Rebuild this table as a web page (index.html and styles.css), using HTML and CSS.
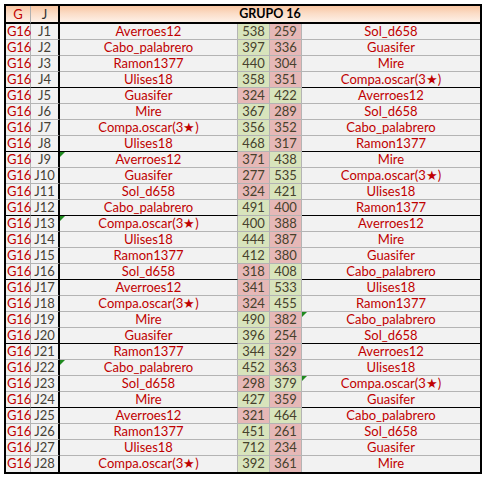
FILE: index.html
```html
<!DOCTYPE html>
<html lang="es">
<head>
<meta charset="utf-8">
<title>Grupo 16</title>
<link rel="stylesheet" href="styles.css">
</head>
<body>
<div class="sheet">
  <div class="hd g">G</div><div class="hd j">J</div><div class="hd title">GRUPO 16</div>

  <div class="c g">G16</div><div class="c j">J1</div><div class="c n">Averroes12</div><div class="c s win">538</div><div class="c s lose">259</div><div class="c n r">Sol_d658</div>
  <div class="c g">G16</div><div class="c j">J2</div><div class="c n">Cabo_palabrero</div><div class="c s win">397</div><div class="c s lose">336</div><div class="c n r">Guasifer</div>
  <div class="c g">G16</div><div class="c j">J3</div><div class="c n">Ramon1377</div><div class="c s win">440</div><div class="c s lose">304</div><div class="c n r">Mire</div>
  <div class="c g end">G16</div><div class="c j end">J4</div><div class="c n end">Ulises18</div><div class="c s win">358</div><div class="c s lose">351</div><div class="c n r end">Compa.oscar(3★)</div>

  <div class="c g">G16</div><div class="c j">J5</div><div class="c n">Guasifer</div><div class="c s lose">324</div><div class="c s win">422</div><div class="c n r">Averroes12</div>
  <div class="c g">G16</div><div class="c j">J6</div><div class="c n">Mire</div><div class="c s win">367</div><div class="c s lose">289</div><div class="c n r">Sol_d658</div>
  <div class="c g">G16</div><div class="c j">J7</div><div class="c n">Compa.oscar(3★)</div><div class="c s win">356</div><div class="c s lose">352</div><div class="c n r">Cabo_palabrero</div>
  <div class="c g end">G16</div><div class="c j end">J8</div><div class="c n end">Ulises18</div><div class="c s win">468</div><div class="c s lose">317</div><div class="c n r end">Ramon1377</div>

  <div class="c g">G16</div><div class="c j">J9</div><div class="c n flag">Averroes12</div><div class="c s lose">371</div><div class="c s win">438</div><div class="c n r">Mire</div>
  <div class="c g">G16</div><div class="c j">J10</div><div class="c n">Guasifer</div><div class="c s lose">277</div><div class="c s win">535</div><div class="c n r">Compa.oscar(3★)</div>
  <div class="c g">G16</div><div class="c j">J11</div><div class="c n">Sol_d658</div><div class="c s lose">324</div><div class="c s win">421</div><div class="c n r">Ulises18</div>
  <div class="c g end">G16</div><div class="c j end">J12</div><div class="c n end">Cabo_palabrero</div><div class="c s win">491</div><div class="c s lose">400</div><div class="c n r end">Ramon1377</div>

  <div class="c g">G16</div><div class="c j">J13</div><div class="c n flag">Compa.oscar(3★)</div><div class="c s win">400</div><div class="c s lose">388</div><div class="c n r">Averroes12</div>
  <div class="c g">G16</div><div class="c j">J14</div><div class="c n">Ulises18</div><div class="c s win">444</div><div class="c s lose">387</div><div class="c n r">Mire</div>
  <div class="c g">G16</div><div class="c j">J15</div><div class="c n">Ramon1377</div><div class="c s win">412</div><div class="c s lose">380</div><div class="c n r">Guasifer</div>
  <div class="c g end">G16</div><div class="c j end">J16</div><div class="c n end">Sol_d658</div><div class="c s lose">318</div><div class="c s win">408</div><div class="c n r end">Cabo_palabrero</div>

  <div class="c g">G16</div><div class="c j">J17</div><div class="c n">Averroes12</div><div class="c s lose">341</div><div class="c s win">533</div><div class="c n r">Ulises18</div>
  <div class="c g">G16</div><div class="c j">J18</div><div class="c n">Compa.oscar(3★)</div><div class="c s lose">324</div><div class="c s win">455</div><div class="c n r">Ramon1377</div>
  <div class="c g">G16</div><div class="c j">J19</div><div class="c n">Mire</div><div class="c s win">490</div><div class="c s lose">382</div><div class="c n r flag">Cabo_palabrero</div>
  <div class="c g end">G16</div><div class="c j end">J20</div><div class="c n end">Guasifer</div><div class="c s win">396</div><div class="c s lose">254</div><div class="c n r end">Sol_d658</div>

  <div class="c g">G16</div><div class="c j">J21</div><div class="c n">Ramon1377</div><div class="c s win">344</div><div class="c s lose">329</div><div class="c n r">Averroes12</div>
  <div class="c g">G16</div><div class="c j">J22</div><div class="c n flag">Cabo_palabrero</div><div class="c s win">452</div><div class="c s lose">363</div><div class="c n r">Ulises18</div>
  <div class="c g">G16</div><div class="c j">J23</div><div class="c n">Sol_d658</div><div class="c s lose">298</div><div class="c s win">379</div><div class="c n r flag">Compa.oscar(3★)</div>
  <div class="c g end">G16</div><div class="c j end">J24</div><div class="c n end">Mire</div><div class="c s win">427</div><div class="c s lose">359</div><div class="c n r end">Guasifer</div>

  <div class="c g">G16</div><div class="c j">J25</div><div class="c n">Averroes12</div><div class="c s lose">321</div><div class="c s win">464</div><div class="c n r">Cabo_palabrero</div>
  <div class="c g">G16</div><div class="c j">J26</div><div class="c n">Ramon1377</div><div class="c s win">451</div><div class="c s lose">261</div><div class="c n r">Sol_d658</div>
  <div class="c g">G16</div><div class="c j">J27</div><div class="c n">Ulises18</div><div class="c s win">712</div><div class="c s lose">234</div><div class="c n r">Guasifer</div>
  <div class="c g last">G16</div><div class="c j last">J28</div><div class="c n last">Compa.oscar(3★)</div><div class="c s win last">392</div><div class="c s lose last">361</div><div class="c n r last">Mire</div>
</div>
</body>
</html>
```
FILE: styles.css
```css
html, body {
  margin: 0;
  padding: 0;
  background: #ffffff;
}
body {
  padding: 4px;
  font-family: Lato, "Liberation Sans", sans-serif;
  font-size: 13px;
}
.sheet {
  display: grid;
  grid-template-columns: 25px 29px 178px 32px 32px 178px;
  grid-template-rows: 18px repeat(28, 16px);
  width: 474px;
  border: 2px solid #000;
  background: #f2f2f2;
}
.hd {
  box-sizing: border-box;
  height: 18px;
  border-bottom: 2px solid #000;
  background: linear-gradient(to bottom, #f8c6a2 0%, #fbdcc6 45%, #fdf1e8 100%);
  display: flex;
  align-items: center;
  justify-content: center;
  line-height: 16px;
}
.hd.g {
  color: #c00000;
  border-right: 1px solid #b0b0b0;
}
.hd.j {
  color: #303030;
  border-right: 2px solid #000;
}
.hd.title {
  grid-column: 3 / 7;
  font-weight: bold;
  font-size: 12.5px;
  color: #000;
}
.c {
  position: relative;
  box-sizing: border-box;
  height: 16px;
  line-height: 15px;
  border-bottom: 1px solid #b4b4b4;
  border-right: 1px solid #b4b4b4;
  text-align: center;
  white-space: nowrap;
  overflow: visible;
}
.c.g {
  color: #c00000;
  text-align: left;
  padding-left: 1px;
  letter-spacing: -0.2px;
}
.c.j {
  color: #454035;
  border-right: 2px solid #000;
}
.c.n {
  color: #c00000;
}
.c.n.r {
  border-right: 0;
}
.c.s {
  color: #46412c;
}
.c.win {
  background: #d8e4bc;
}
.c.lose {
  background: #e6b8b7;
}
.c.end {
  border-bottom-color: #000;
}
.c.last {
  border-bottom: 0;
}
.c.flag::before {
  content: "";
  position: absolute;
  left: 0;
  top: 0;
  width: 0;
  height: 0;
  border-top: 5px solid #1f8a1f;
  border-right: 5px solid transparent;
}
```
